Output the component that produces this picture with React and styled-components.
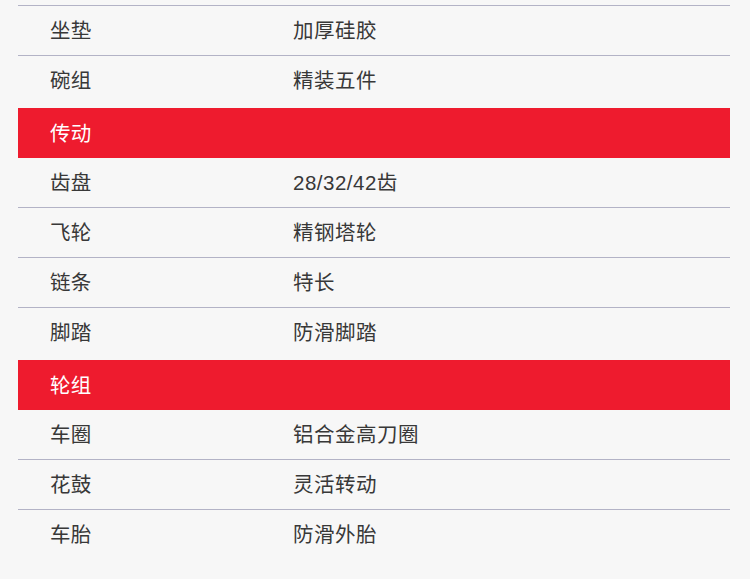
import styled, { createGlobalStyle } from "styled-components";

const GlobalStyle = createGlobalStyle`
  html, body {
    margin: 0;
    padding: 0;
    background: #f7f7f7;
  }
  body {
    font-family: "Liberation Sans", "Noto Sans CJK SC", sans-serif;
  }
`;

const specs = [
  { label: "坐垫", value: "加厚硅胶" },
  { label: "碗组", value: "精装五件" },
  { label: "传动", section: true },
  { label: "齿盘", value: "28/32/42齿" },
  { label: "飞轮", value: "精钢塔轮" },
  { label: "链条", value: "特长" },
  { label: "脚踏", value: "防滑脚踏" },
  { label: "轮组", section: true },
  { label: "车圈", value: "铝合金高刀圈" },
  { label: "花鼓", value: "灵活转动" },
  { label: "车胎", value: "防滑外胎" },
];

const App = () => {
  return (
    <Page>
      <GlobalStyle />
      <Table>
        {specs.map((item, i) => {
          if (item.section) return <Section key={i}>{item.label}</Section>;
          const next = specs[i + 1];
          const plain = !next || next.section;
          return (
            <Row key={i} plain={plain}>
              <Label>{item.label}</Label>
              <Value>{item.value}</Value>
            </Row>
          );
        })}
      </Table>
    </Page>
  );
};

export default App;

const Page = styled.div`
  width: 750px;
  height: 579px;
  overflow: hidden;
  background: #f7f7f7;
`;

const Table = styled.div`
  margin: 5px 20px 0 18px;
  border-top: 1px solid #b3b3c6;
  display: flex;
  flex-direction: column;
`;

const Row = styled.div`
  box-sizing: border-box;
  height: 50px;
  display: grid;
  grid-template-columns: 243px 1fr;
  align-items: center;
  padding: 2px 0 0 32px;
  border-bottom: ${(props) => (props.plain ? "1px solid transparent" : "1px solid #b3b3c6")};
  color: #383838;
  font-size: 20.5px;
  line-height: 1.3;
`;

const Label = styled.span`
  letter-spacing: 0.3px;
`;

const Value = styled.span`
  letter-spacing: 0.5px;
`;

const Section = styled.div`
  box-sizing: border-box;
  height: 50px;
  margin-top: 2px;
  display: flex;
  align-items: center;
  padding: 2px 0 0 32px;
  background: #ee1b2e;
  color: #ffffff;
  font-size: 20.5px;
  line-height: 1.3;
  letter-spacing: 0.3px;
`;
